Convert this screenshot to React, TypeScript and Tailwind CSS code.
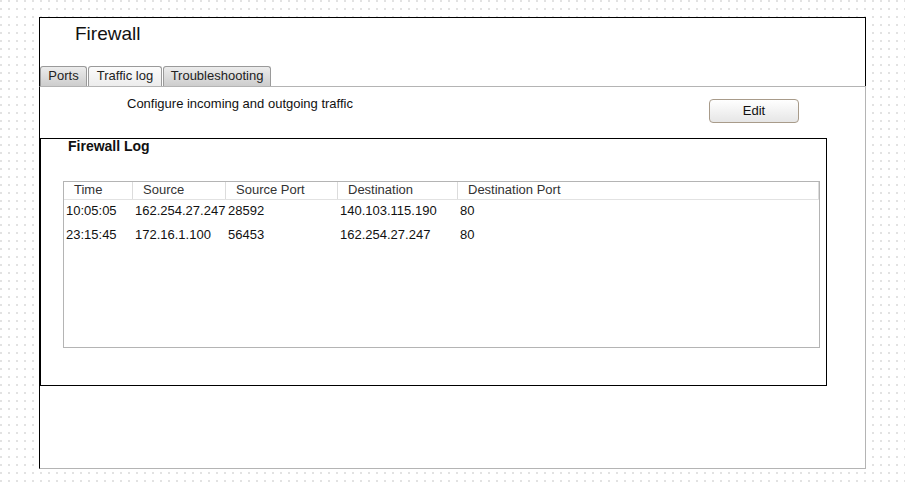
const columns = ["Time", "Source", "Source Port", "Destination", "Destination Port"];

const rows = [
  ["10:05:05", "162.254.27.247", "28592", "140.103.115.190", "80"],
  ["23:15:45", "172.16.1.100", "56453", "162.254.27.247", "80"],
];

const tabs = [
  { label: "Ports", width: "w-[47px]", active: false },
  { label: "Traffic log", width: "w-[74px]", active: true },
  { label: "Troubleshooting", width: "w-[108px]", active: false },
];

const grid = "grid grid-cols-[69px_93px_112px_120px_1fr]";

const App = () => {
  return (
    <div className="w-[905px] h-[486px] overflow-hidden bg-white bg-[radial-gradient(circle_at_1px_1px,#e2e2e2_0.8px,transparent_1px)] bg-[length:8px_8px] pt-[17px] pl-[39px] font-['Liberation_Sans',Arial,sans-serif] text-[#111]">
      <div className="w-[827px] flex flex-col">
        {/* header with title and tabs */}
        <div className="h-[69px] bg-white border-t border-l border-r border-black flex flex-col">
          <div className="pl-[35px] pt-[5px] text-[19px] leading-[22px]">Firewall</div>
          <div className="mt-auto flex gap-px">
            {tabs.map((tab) => (
              <div
                key={tab.label}
                className={`${tab.width} h-[20px] pb-[2px] flex items-center justify-center rounded-t-[3px] border border-b-0 border-[#9a9a9a] text-[13px] text-[#222] ${
                  tab.active
                    ? "bg-gradient-to-b from-[#fbfbfb] to-[#ececec]"
                    : "bg-gradient-to-b from-[#ececec] to-[#cdcdcd]"
                }`}
              >
                {tab.label}
              </div>
            ))}
          </div>
        </div>

        {/* tab panel */}
        <div className="h-[383px] bg-white border-t border-r border-b border-t-[#b4b4b4] border-r-[#b4b4b4] border-b-[#b4b4b4] border-l border-l-black flex flex-col">
          <div className="flex items-start">
            <div className="ml-[87px] mt-[9px] text-[13px] leading-[15px]">
              Configure incoming and outgoing traffic
            </div>
            <button className="ml-auto mr-[66px] mt-[12px] w-[90px] h-[24px] rounded-[4px] border border-[#a89b8a] bg-gradient-to-b from-white to-[#e6e6e6] text-[13px] text-[#111]">
              Edit
            </button>
          </div>

          <div className="mt-[15px] w-[787px] h-[248px] border border-black flex flex-col">
            <div className="pl-[27px] text-[14px] leading-[15px] font-bold">Firewall Log</div>
            <div className="ml-[22px] mt-[27px] w-[757px] h-[167px] border border-[#b4b4b4]">
              <div className={`${grid} h-[18px] border-b border-[#e2e2e2]`}>
                {columns.map((col) => (
                  <div
                    key={col}
                    className="pl-[10px] border-r border-[#dcdcdc] text-[13px] leading-[15px] text-[#333]"
                  >
                    {col}
                  </div>
                ))}
              </div>
              {rows.map((row) => (
                <div key={row[0]} className={`${grid} h-[24px]`}>
                  {row.map((cell, i) => (
                    <div key={i} className="pl-[2px] text-[13px] leading-[22px] text-[#111]">
                      {cell}
                    </div>
                  ))}
                </div>
              ))}
            </div>
          </div>
        </div>
      </div>
    </div>
  );
};

export default App;
